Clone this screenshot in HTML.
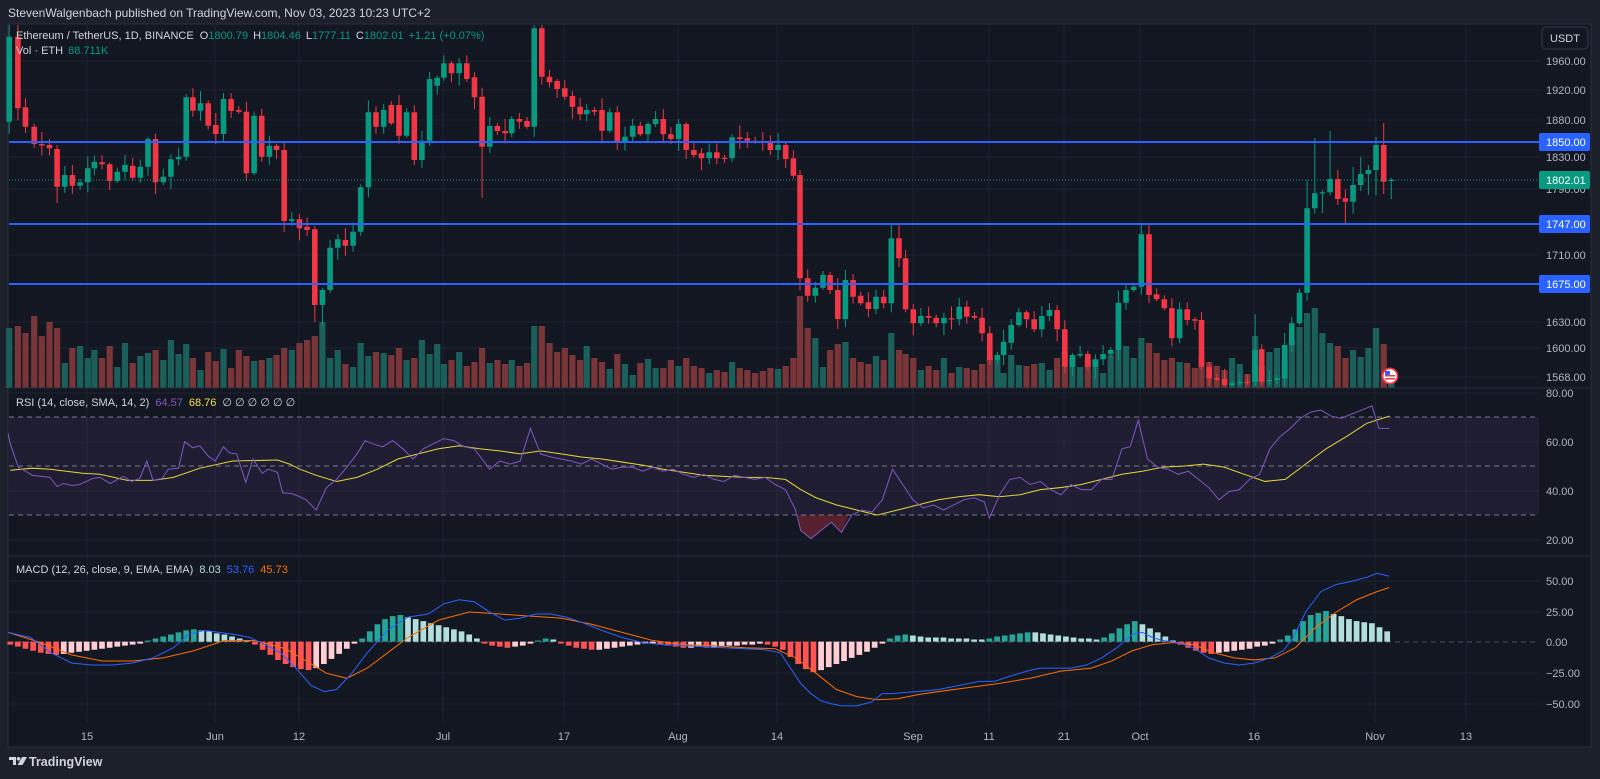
<!DOCTYPE html>
<html><head><meta charset="utf-8">
<style>
html,body{margin:0;padding:0;background:#1c202b;}
svg{display:block;font-family:"Liberation Sans",sans-serif;}
</style></head>
<body>
<svg width="1600" height="779" viewBox="0 0 1600 779" xmlns="http://www.w3.org/2000/svg">
<rect x="0" y="0" width="1600" height="779" fill="#1c202b"/>
<rect x="8" y="24" width="1583" height="723" fill="#131722" stroke="#2a2e39" stroke-width="1"/>
<text x="8" y="17" fill="#d1d4dc" font-size="12">StevenWalgenbach published on TradingView.com, Nov 03, 2023 10:23 UTC+2</text>
<g stroke="#1f2330" stroke-width="1">
<path d="M87 25V722M215 25V722M299 25V722M443 25V722M564 25V722M678 25V722M777 25V722M913 25V722M989 25V722M1064 25V722M1140 25V722M1254 25V722M1375 25V722M1466 25V722"/>
<path d="M9 61H1539M9 90H1539M9 120H1539M9 157H1539M9 189H1539M9 255H1539M9 322H1539M9 348H1539M9 377H1539M9 393H1539M9 442H1539M9 491H1539M9 540H1539M9 581H1539M9 612H1539M9 673H1539M9 704H1539"/>
</g>
<rect x="9" y="417" width="1530" height="98" fill="#7e57c2" fill-opacity="0.1"/>
<g stroke="#787b86" stroke-dasharray="5,4" stroke-width="1">
<line x1="9" y1="417" x2="1539" y2="417"/>
<line x1="9" y1="466" x2="1539" y2="466"/>
<line x1="9" y1="515" x2="1539" y2="515"/>
<line x1="9" y1="642" x2="1539" y2="642" stroke="#4a4e5a"/>
</g>

<!-- volume: green -->
<path stroke="#1b5f5a" stroke-width="6.2" fill="none" d="M9.2 388V328M64.8 388V363M80.1 388V346M87.8 388V358M94.4 388V350M117.3 388V367M125 388V343M140.3 388V356M148 388V353M163.3 388V360M170.9 388V340M178.6 388V354M186.2 388V344M200.5 388V370M223.5 388V349M254.1 388V361M269.4 388V358M291.8 388V350M322.4 388V322M330.1 388V358M337.8 388V350M353.1 388V367M360.7 388V343M368.4 388V356M383.7 388V353M406.6 388V360M421.9 388V340M429.6 388V354M437.2 388V344M443.9 388V364M459.2 388V352M489.8 388V363M511.7 388V360M534.2 388V326M586.7 388V346M609.7 388V369M625 388V364M632.7 388V375M648 388V359M655.6 388V368M678.6 388V366M709.2 388V373M732.1 388V362M778.1 388V369M815.3 388V338M823 388V367M845.4 388V342M876 388V356M891.3 388V333M920.9 388V370M943.9 388V358M959.2 388V367M997.4 388V360M1003.6 388V373M1011.2 388V355M1018.9 388V365M1041.8 388V363M1049.5 388V370M1072.4 388V358M1080.1 388V367M1095.4 388V360M1103.1 388V373M1110.7 388V355M1118.4 388V350M1126 388V346M1133.7 388V358M1141.3 388V338M1179.6 388V362M1232.1 388V358M1239.8 388V364M1255.1 388V336M1269.4 388V352M1277 388V348M1284.7 388V360M1291.8 388V340M1299.5 388V327M1307.1 388V313M1314.8 388V308M1322.4 388V333M1330.1 388V343M1353.1 388V350M1360.7 388V357M1368.4 388V348M1376 388V328M1391.3 388V383"/>
<!-- volume: red -->
<path stroke="#7a3539" stroke-width="6.2" fill="none" d="M17.9 388V326M25.5 388V333M34.2 388V316M41.8 388V336M49.5 388V322M57.1 388V328M72.4 388V348M102 388V358M109.7 388V346M132.7 388V363M155.6 388V350M192.9 388V358M208.2 388V352M215.8 388V361M231.1 388V368M238.8 388V350M246.4 388V356M261.7 388V360M276.5 388V355M284.2 388V348M299.5 388V343M307.1 388V340M314.8 388V336M345.4 388V364M376 388V352M391.3 388V355M399 388V348M414.3 388V358M451.5 388V360M466.8 388V366M474.5 388V362M482.1 388V348M497.4 388V360M505.1 388V364M519.4 388V366M527 388V363M541.8 388V326M549.5 388V343M557.1 388V352M564.8 388V348M572.4 388V355M580.1 388V360M594.4 388V358M602 388V362M617.3 388V354M640.3 388V363M663.3 388V368M670.9 388V360M686.2 388V358M693.9 388V366M701.5 388V368M716.8 388V370M724.5 388V372M739.8 388V368M747.4 388V370M755.1 388V373M762.8 388V371M770.4 388V368M785.7 388V366M793.4 388V358M800 388V296M807.7 388V328M830.1 388V350M837.8 388V344M853.1 388V358M860.7 388V362M868.4 388V364M883.7 388V360M899 388V350M905.6 388V354M913.3 388V358M928.6 388V366M936.2 388V370M951.5 388V373M966.8 388V368M974.5 388V370M982.1 388V364M989.8 388V356M1026.5 388V366M1034.2 388V364M1057.1 388V358M1064.8 388V352M1087.8 388V360M1149 388V343M1156.6 388V353M1164.3 388V360M1171.9 388V358M1187.2 388V363M1194.9 388V368M1201.5 388V356M1209.2 388V362M1216.8 388V366M1224.5 388V370M1247.4 388V374M1261.7 388V366M1337.8 388V346M1345.4 388V358M1383.7 388V344"/>

<!-- candles green -->
<path stroke="#089981" stroke-width="1" fill="none" d="M9.2 25V133.7M64.8 166V192.7M80.1 179.3V189.7M87.8 156.3V192.3M94.4 155.7V175.3M117.3 167.7V183M125 155V179.7M140.3 159.7V182.7M148 137V175.7M163.3 168.7V185.3M170.9 154.3V188.7M178.6 147.7V165.3M186.2 94.3V160.7M200.5 91.3V120.7M223.5 93V141M254.1 111.7V175.3M269.4 135.7V164.7M291.8 212.3V226M322.4 288V326M330.1 239.7V293M337.8 234.3V259.7M353.1 222.7V251.7M360.7 184.3V235.7M368.4 100.3V197.3M383.7 104V133.7M406.6 108.3V137.7M421.9 130.7V168M429.6 72V145.7M437.2 75.7V94.7M443.9 55.3V80.7M459.2 58.3V85.3M489.8 117V152.7M511.7 116V137.3M534.2 25V136.7M586.7 104V121.3M609.7 108.3V132.7M625 126.7V150.7M632.7 118.7V141.7M648 122V143.3M655.6 111V127M678.6 119V151M709.2 143.3V164.3M732.1 134.3V162.3M778.1 133V160M815.3 281.7V302.7M823 271V289.7M845.4 270V327M876 289.7V314M891.3 223V312.3M920.9 308V326.3M943.9 312.7V335.3M959.2 297.7V325.3M997.4 352V364M1003.6 329.7V365M1011.2 319V349.7M1018.9 308.3V327M1041.8 306V337.3M1049.5 303V321M1072.4 353V375.7M1080.1 346V358M1095.4 354.3V378.7M1103.1 345V365.3M1110.7 347V358M1118.4 290.7V360M1126 284V309.7M1133.7 282.7V292M1141.3 224.3V294.7M1179.6 302.3V343.3M1232.1 381.3V386M1239.8 373.7V385.3M1255.1 314V385.7M1269.4 371V385M1277 375.3V384M1284.7 333V386M1291.8 317.3V352M1299.5 288.7V325.3M1307.1 180V300.7M1314.8 138V213.3M1322.4 190.3V213M1330.1 131V195.3M1353.1 167V213.7M1360.7 157V191M1368.4 165V195M1376 137V195M1391.3 178V199"/>
<path stroke="#089981" stroke-width="5.6" fill="none" d="M9.2 121.7V36.7M64.8 186.7V175M80.1 185.7V182.3M87.8 182.3V168.3M94.4 168.3V161.7M117.3 181V171.7M125 171.7V165M140.3 177.7V166.7M148 166.7V139M163.3 182.3V176.7M170.9 176.7V159.3M178.6 159.3V156.7M186.2 156.7V97.3M200.5 110.7V103.3M223.5 134V99M254.1 173.3V115.7M269.4 156.7V145.7M291.8 221V219.3M322.4 305V290M330.1 290V247.7M337.8 247.7V239.3M353.1 245.7V231.7M360.7 231.7V187.3M368.4 187.3V112.3M383.7 126.7V110M406.6 135.7V112.3M421.9 160V140.7M429.6 140.7V79M437.2 85.7V77.7M443.9 77.7V63.3M459.2 73.3V63.3M489.8 146.7V126M511.7 133.3V119M534.2 126.7V28.3M586.7 114.3V110M609.7 130.7V112.3M625 142.7V136.7M632.7 136.7V125.7M648 134.3V124M655.6 124V119M678.6 139V124M709.2 158.3V152.3M732.1 158.3V137.3M778.1 150V145M815.3 295.7V287.7M823 287.7V275M845.4 319V280M876 309V296.7M891.3 303.3V238.3M920.9 323.3V316M943.9 323.3V317.7M959.2 319.3V306.7M997.4 360V355M1003.6 355V341.7M1011.2 342.7V325M1018.9 325V312.3M1041.8 329.3V316M1049.5 316V310M1072.4 366.7V355M1080.1 355.5V354M1095.4 366.7V359.3M1103.1 359.3V354M1110.7 354V350M1118.4 350V302.7M1126 302.7V290M1133.7 290V286.7M1141.3 286.7V234.3M1179.6 338.3V309.3M1232.1 385V383.3M1239.8 383.3V381.7M1255.1 381.7V350M1269.4 381.2V380M1277 380V378.3M1284.7 378.3V345M1291.8 345V323.3M1299.5 323.3V292.7M1307.1 292.7V208.3M1314.8 208.3V193.3M1322.4 193.5V192.3M1330.1 192.3V179M1353.1 201.7V185M1360.7 185V174M1368.4 174V170M1376 170V145M1391.3 181V179.8"/>
<!-- candles red -->
<path stroke="#f23645" stroke-width="1" fill="none" d="M17.9 25V120.3M25.5 98.3V132.7M34.2 123.7V148M41.8 132V155.5M49.5 139V155.3M57.1 145V203M72.4 165V193.7M102 155.3V169.3M109.7 162.3V190M132.7 157.7V180.7M155.6 134V194.3M192.9 88.3V116.7M208.2 100.3V129.7M215.8 113V144M231.1 93V118M238.8 106V113.7M246.4 101.7V181.3M261.7 108.7V161.7M276.5 143.7V159M284.2 142V232M299.5 214.3V240.3M307.1 217.7V236M314.8 226.3V322M345.4 228V255.7M376 106.3V133.7M391.3 101V125.3M399 95V143.7M414.3 105.3V165M451.5 61.3V82.3M466.8 55.3V82M474.5 72.3V109.3M482.1 87.7V198M497.4 123V135M505.1 119V143.3M519.4 113V128.7M527 117V128.7M541.8 25V84.7M549.5 69.7V87.3M557.1 79V98M564.8 80.3V99.7M572.4 91V118.7M580.1 97.7V120.3M594.4 107V115.7M602 98V140.7M617.3 106.3V149.7M640.3 121.7V136.3M663.3 109V142.3M670.9 127.3V144M686.2 122V159M693.9 142V158M701.5 148.3V170.3M716.8 143.3V164.3M724.5 154.7V162.9M739.8 125.3V149M747.4 132.3V147.7M755.1 136.7V143.7M762.8 131.7V150.9M770.4 135.3V155M785.7 143V168M793.4 150.3V178.7M800 170V290.3M807.7 269.3V301.7M830.1 272V294M837.8 278V329M853.1 274V303.7M860.7 291.7V305.3M868.4 292.3V317M883.7 289.7V308.3M899 224V267.3M905.6 250.3V312.3M913.3 304.3V335.3M928.6 307V323.7M936.2 314.7V327.3M951.5 306.3V329.5M966.8 300.7V323.7M974.5 312V319.7M982.1 307.7V341.3M989.8 326.3V365M1026.5 310.3V328.3M1034.2 311.3V332.3M1057.1 305V341.3M1064.8 320.3V372.7M1087.8 351V370.7M1149 224V303M1156.6 288.3V301.3M1164.3 295.3V310.3M1171.9 298.3V346.3M1187.2 302.3V325M1194.9 317.3V329.7M1201.5 312V369.7M1209.2 361.7V386M1216.8 374.3V381.3M1224.5 369V386M1247.4 374.7V385M1261.7 344.3V385M1337.8 170V205M1345.4 189.3V225M1383.7 123V194"/>
<path stroke="#f23645" stroke-width="5.6" fill="none" d="M17.9 36.7V108.3M25.5 107.3V126.7M34.2 126.7V144M41.8 144V145.5M49.5 145V148.3M57.1 149V186.7M72.4 175V185.7M102 162.3V164.3M109.7 164.3V181M132.7 165.7V177.7M155.6 139V182.3M192.9 97.3V110.7M208.2 103.3V125.7M215.8 125V134M231.1 99V111M238.8 110V111.7M246.4 111.7V173.3M261.7 115.7V156.7M276.5 145.7V150M284.2 150V221M299.5 219.3V228.3M307.1 226.7V230M314.8 229.3V305M345.4 240V245.7M376 112.3V126.7M391.3 105V123.3M399 105V135.7M414.3 112.3V160M451.5 63.3V73.3M466.8 63.3V79M474.5 77.3V97.3M482.1 96.7V146.7M497.4 126V131M505.1 131V133.3M519.4 119V121.7M527 121V126.7M541.8 28.3V76.7M549.5 76.7V82.3M557.1 81V89M564.8 88.3V96.7M572.4 96V106.7M580.1 106.7V114.3M594.4 110V111.7M602 110V130.7M617.3 112.3V142.7M640.3 125.7V134.3M663.3 119V134.3M670.9 134.3V139M686.2 124V150M693.9 150V155M701.5 153.3V158.3M716.8 152.3V158.3M724.5 157.7V158.9M739.8 137.3V139M747.4 138.3V140.7M755.1 140.7V141.9M762.8 141.7V142.9M770.4 142.3V150M785.7 145V159M793.4 158.3V175.7M800 175V278.3M807.7 278.3V295.7M830.1 275V290M837.8 290V319M853.1 280V296.7M860.7 295.7V303.3M868.4 302.3V309M883.7 296.7V303.3M899 238.3V258.3M905.6 258.3V309.3M913.3 309.3V323.3M928.6 316V317.7M936.2 317.7V323.3M951.5 318.3V319.5M966.8 306.7V316.7M974.5 316V317.7M982.1 317.7V333.3M989.8 333.3V360M1026.5 312.3V319.3M1034.2 319.3V329.3M1057.1 310V329.3M1064.8 329.3V366.7M1087.8 354V366.7M1149 234.3V295M1156.6 294.3V299.3M1164.3 299.3V308.3M1171.9 308.3V338.3M1187.2 309.3V320M1194.9 319.3V320.7M1201.5 320V366.7M1209.2 366.7V378.3M1216.8 378.3V379.5M1224.5 379V385M1247.4 381.7V382.9M1261.7 349.3V381.7M1337.8 179V199M1345.4 198.3V201.7M1383.7 145V181.7"/>

<g stroke-width="2">
<line x1="9" y1="142" x2="1539" y2="142" stroke="#2962ff"/>
<line x1="9" y1="224" x2="1539" y2="224" stroke="#2962ff"/>
<line x1="9" y1="284" x2="1539" y2="284" stroke="#2962ff"/>
</g>
<line x1="9" y1="180" x2="1539" y2="180" stroke="#089981" stroke-dasharray="1,2" stroke-width="1"/>

<!-- indicators in display coords scaled 1.02 -->
<g transform="scale(1.02)" fill="none">
<path fill="#f23645" fill-opacity="0.3" stroke="none" d="M782 505L785 520L795 528L805 520L815 512L825 522L832 505Z"/>
<path stroke="#e6d53a" stroke-width="1" d="M10 461L32 459L49 460L81 464L98 465L125 471L150 471L170 468L196 459L228 452L272 451L284 455L294 460L310 466L330 472L350 468L370 460L390 450L410 445L430 440L450 437L470 440L490 442L510 445L530 442L550 445L570 448L590 450L610 453L630 456L650 460L670 463L690 466L710 467L730 468L750 468L770 470L785 480L800 488L820 495L840 500L860 505L880 500L900 495L920 490L940 487L960 485L980 487L1000 485L1020 480L1040 478L1060 475L1080 470L1100 465L1120 462L1140 458L1160 457L1180 455L1200 458L1220 465L1240 472L1260 470L1280 455L1300 440L1320 428L1340 415L1362 408"/>
<path stroke="#7e57c2" stroke-width="1" d="M8 425L10 435L18 458L32 466L49 468L56 477L62 474L71 476L78 475L91 469L98 468L108 474L121 467L129 472L137 469L144 452L150 471L159 469L165 460L175 459L181 433L189 439L196 437L204 447L211 452L219 438L225 444L232 445L241 473L248 450L257 464L263 460L272 463L277 483L286 484L294 487L300 490L310 500L320 478L330 470L340 458L350 445L358 432L365 435L375 438L385 432L395 440L405 450L415 440L425 435L435 430L445 432L455 438L465 440L480 460L490 452L500 455L510 452L520 420L530 445L540 448L550 450L560 452L570 455L580 450L590 455L600 460L610 458L620 458L630 462L640 458L650 462L660 460L670 465L680 468L690 465L700 470L710 472L720 466L730 468L740 470L750 468L760 475L770 480L780 500L785 520L795 528L805 520L815 512L825 522L835 505L845 500L855 502L865 490L875 460L885 475L895 490L905 498L915 495L925 500L935 495L945 490L955 488L965 492L970 508L980 485L990 470L1000 468L1010 475L1020 472L1030 480L1040 485L1050 475L1060 480L1070 480L1080 470L1090 470L1100 440L1108 438L1116 412L1125 450L1135 458L1145 460L1155 465L1165 462L1175 470L1185 478L1195 490L1205 482L1215 480L1225 470L1235 465L1245 440L1255 428L1265 420L1275 410L1285 404L1295 402L1305 408L1315 410L1325 406L1335 402L1345 398L1352 420L1362 420"/>
<!-- histogram -->
<path stroke="#ff5252" stroke-width="5.6" d="M10 629V632M17.5 629V634M25 629V636M32.5 629V638M40 629V640M47.5 629V641M55 629V642M250 629V632M257.5 629V637M265 629V642M272.5 629V647M280 629V651M287.5 629V654M295 629V656M302.5 629V657M475 629V631M482.5 629V633M490 629V634M497.5 629V635M550 629V631M557.5 629V633M565 629V635M572.5 629V636M580 629V637M647.5 629V632M655 629V633M662.5 629V634M670 629V635M692.5 629V635M752.5 629V632M760 629V634M767.5 629V637M775 629V644M782.5 629V651M790 629V656M797.5 629V659M1157.5 629V632M1165 629V635M1172.5 629V638M1180 629V640M1187.5 629V641"/>
<path stroke="#ffcdd2" stroke-width="5.6" d="M62.5 629V641M70 629V640M77.5 629V639M85 629V638M92.5 629V637M100 629V636M107.5 629V635M115 629V634M122.5 629V633M130 629V632M137.5 629V631M310 629V655M317.5 629V651M325 629V646M332.5 629V641M340 629V636M347.5 629V631M505 629V634M512.5 629V633M520 629V631M587.5 629V637M595 629V636M602.5 629V635M610 629V634M617.5 629V633M625 629V632M632.5 629V631M640 629V631M677.5 629V635M685 629V634M700 629V635M707.5 629V634M715 629V633M722.5 629V633M730 629V632M737.5 629V632M745 629V631M805 629V657M812.5 629V654M820 629V651M827.5 629V648M835 629V645M842.5 629V642M850 629V639M857.5 629V635M865 629V631M1195 629V640M1202.5 629V639M1210 629V638M1217.5 629V637M1225 629V636M1232.5 629V634M1240 629V633M1247.5 629V631"/>
<path stroke="#26a69a" stroke-width="5.6" d="M145 629V628M152.5 629V626M160 629V624M167.5 629V622M175 629V620M182.5 629V618M190 629V617M355 629V626M362.5 629V619M370 629V612M377.5 629V607M385 629V604M392.5 629V603M527.5 629V628M535 629V626M872.5 629V626M880 629V623M887.5 629V622M970 629V626M977.5 629V624M985 629V623M992.5 629V622M1000 629V621M1007.5 629V620M1082.5 629V625M1090 629V621M1097.5 629V616M1105 629V612M1112.5 629V609M1255 629V627M1262.5 629V623M1270 629V617M1277.5 629V609M1285 629V603M1292.5 629V601M1300 629V599"/>
<path stroke="#b2dfdb" stroke-width="5.6" d="M197.5 629V618M205 629V619M212.5 629V621M220 629V622M227.5 629V624M235 629V626M242.5 629V628M400 629V605M407.5 629V607M415 629V609M422.5 629V611M430 629V613M437.5 629V615M445 629V617M452.5 629V619M460 629V622M467.5 629V626M542.5 629V627M895 629V623M902.5 629V624M910 629V625M917.5 629V625M925 629V625M932.5 629V626M940 629V626M947.5 629V626M955 629V627M962.5 629V627M1015 629V620M1022.5 629V621M1030 629V622M1037.5 629V623M1045 629V624M1052.5 629V625M1060 629V626M1067.5 629V626M1075 629V627M1120 629V612M1127.5 629V616M1135 629V620M1142.5 629V624M1150 629V628M1307.5 629V602M1315 629V604M1322.5 629V607M1330 629V609M1337.5 629V610M1345 629V611M1352.5 629V615M1360 629V619"/>
<path stroke="#ff6d00" stroke-width="1" d="M8 620L40 630L70 642L100 648L130 648L160 645L190 638L220 628L250 628L280 636L300 648L320 660L340 665L360 655L380 640L400 625L430 608L460 600L490 602L520 604L550 606L580 612L610 620L640 628L670 632L700 633L730 635L760 636L780 645L800 660L820 676L840 683L860 686L880 685L900 681L920 678L950 674L980 670L1010 665L1040 658L1070 655L1090 648L1110 638L1130 632L1150 630L1170 632L1190 640L1210 645L1230 647L1250 645L1270 635L1290 615L1310 600L1330 588L1350 580L1362 576"/>
<path stroke="#2962ff" stroke-width="1" d="M8 620L30 625L50 640L70 650L90 652L110 652L130 650L150 645L170 635L185 622L200 618L215 620L230 622L245 625L260 632L275 640L290 655L305 672L318 678L330 676L345 660L360 640L380 618L400 605L420 602L435 592L450 588L465 590L480 600L495 608L510 606L525 602L540 602L555 605L570 610L590 618L610 625L630 630L650 632L670 633L690 634L710 635L730 636L750 637L765 640L775 655L785 670L795 680L805 687L815 690L825 692L840 692L855 688L865 680L875 680L885 679L900 678L920 676L940 672L960 668L975 668L990 663L1000 660L1010 657L1020 655L1035 655L1050 655L1065 652L1080 645L1095 635L1110 622L1120 620L1130 625L1140 628L1155 630L1170 635L1185 645L1200 650L1215 652L1230 650L1245 645L1258 638L1268 625L1280 600L1295 580L1310 573L1325 570L1340 566L1350 562L1362 565"/>
</g>

<line x1="8" y1="388" x2="1591" y2="388" stroke="#2a2e39"/>
<line x1="8" y1="556" x2="1591" y2="556" stroke="#2a2e39"/>
<g transform="translate(1390,376)">
<circle r="7.5" fill="#fff" stroke="#f23645" stroke-width="1.8"/>
<rect x="-5" y="-1" width="10" height="1.5" fill="#f23645"/>
<rect x="-5" y="2" width="10" height="1.5" fill="#f23645"/>
<rect x="-5" y="-5" width="5" height="4" fill="#2962ff"/>
</g>
<text x="16" y="39" font-size="11" fill="#d1d4dc">Ethereum / TetherUS, 1D, BINANCE <tspan dx="3">O</tspan><tspan fill="#089981">1800.79</tspan><tspan dx="5">H</tspan><tspan fill="#089981">1804.46</tspan><tspan dx="5">L</tspan><tspan fill="#089981">1777.11</tspan><tspan dx="5">C</tspan><tspan fill="#089981">1802.01</tspan><tspan dx="5" fill="#089981">+1.21 (+0.07%)</tspan></text>
<text x="16" y="54" font-size="11" fill="#d1d4dc">Vol · ETH <tspan dx="2" fill="#089981">88.711K</tspan></text>
<text x="16" y="406" font-size="11" fill="#d1d4dc">RSI (14, close, SMA, 14, 2) <tspan dx="3" fill="#7e57c2">64.57</tspan><tspan dx="6" fill="#f5e348">68.76</tspan><tspan dx="6">∅  ∅  ∅  ∅  ∅  ∅</tspan></text>
<text x="16" y="573" font-size="11" fill="#d1d4dc">MACD (12, 26, close, 9, EMA, EMA) <tspan dx="3" fill="#b2dfdb">8.03</tspan><tspan dx="6" fill="#2962ff">53.76</tspan><tspan dx="6" fill="#ff6d00">45.73</tspan></text>
<rect x="1542" y="27" width="46" height="22" rx="4" fill="#131722" stroke="#363a45"/>
<text x="1565" y="42" font-size="11" fill="#d1d4dc" text-anchor="middle">USDT</text>
<g font-size="11" fill="#b2b5be">
<text x="1546" y="65">1960.00</text>
<text x="1546" y="94">1920.00</text>
<text x="1546" y="124">1880.00</text>
<text x="1546" y="161">1830.00</text>
<text x="1546" y="193">1790.00</text>
<text x="1546" y="259">1710.00</text>
<text x="1546" y="326">1630.00</text>
<text x="1546" y="352">1600.00</text>
<text x="1546" y="381">1568.00</text>
<text x="1546" y="397">80.00</text>
<text x="1546" y="446">60.00</text>
<text x="1546" y="495">40.00</text>
<text x="1546" y="544">20.00</text>
<text x="1546" y="585">50.00</text>
<text x="1546" y="616">25.00</text>
<text x="1546" y="646">0.00</text>
<text x="1546" y="677">−25.00</text>
<text x="1546" y="708">−50.00</text>
</g>
<rect x="1539" y="133" width="51" height="18" rx="2" fill="#2962ff"/>
<text x="1546" y="146" font-size="11" fill="#fff">1850.00</text>
<rect x="1539" y="171" width="51" height="18" rx="2" fill="#089981"/>
<text x="1546" y="184" font-size="11" fill="#fff">1802.01</text>
<rect x="1539" y="215" width="51" height="18" rx="2" fill="#2962ff"/>
<text x="1546" y="228" font-size="11" fill="#fff">1747.00</text>
<rect x="1539" y="275" width="51" height="18" rx="2" fill="#2962ff"/>
<text x="1546" y="288" font-size="11" fill="#fff">1675.00</text>
<g font-size="11" fill="#b2b5be" text-anchor="middle">
<text x="87" y="740">15</text><text x="215" y="740">Jun</text><text x="299" y="740">12</text>
<text x="443" y="740">Jul</text><text x="564" y="740">17</text><text x="678" y="740">Aug</text>
<text x="777" y="740">14</text><text x="913" y="740">Sep</text><text x="989" y="740">11</text>
<text x="1064" y="740">21</text><text x="1140" y="740">Oct</text><text x="1254" y="740">16</text>
<text x="1375" y="740">Nov</text><text x="1466" y="740">13</text>
</g>
<g transform="translate(9,757)" fill="#d1d4dc">
<path d="M0 0h7v8h-3v-5h-4z"/>
<circle cx="9.5" cy="1.8" r="1.8"/>
<path d="M13 0h5l-4.5 8h-5z"/>
</g>
<text x="29" y="766" font-size="12.5" fill="#d1d4dc" font-weight="bold">TradingView</text>
</svg>
</body></html>
